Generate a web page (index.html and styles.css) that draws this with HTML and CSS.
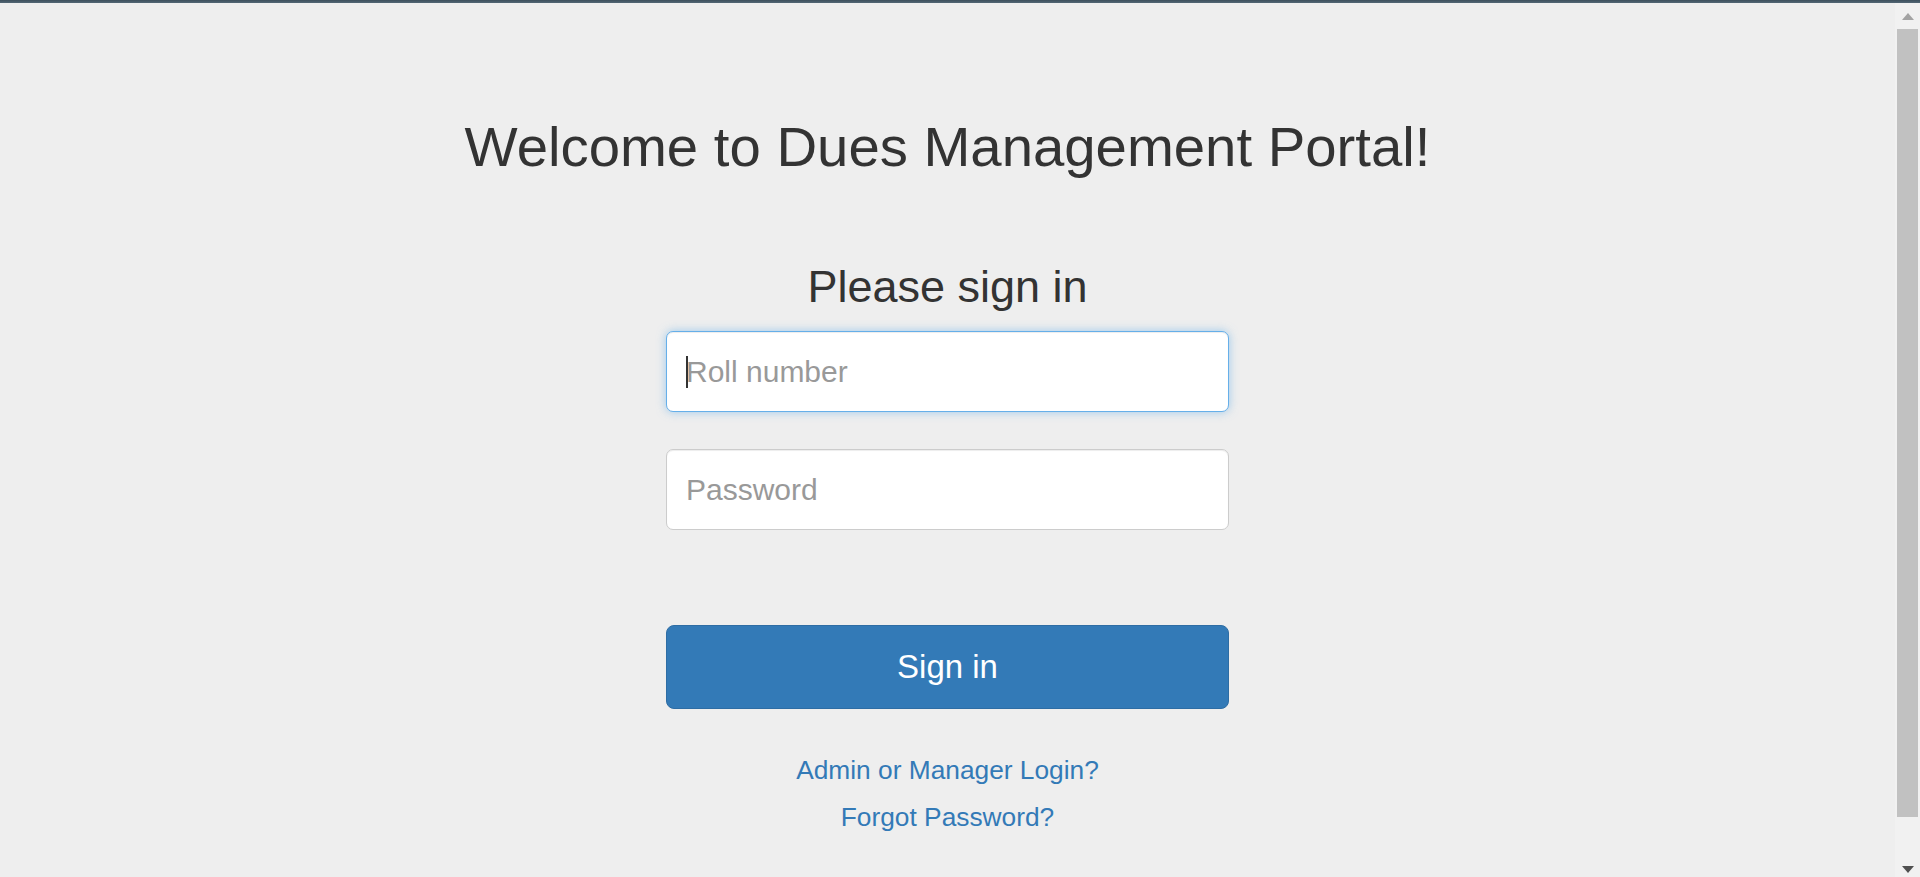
FILE: index.html
```html
<!DOCTYPE html>
<html lang="en">
<head>
<meta charset="utf-8">
<title>Dues Management Portal</title>
<link rel="stylesheet" href="styles.css">
</head>
<body>
<div class="topbar"></div>
<div class="frame">
  <main class="page">
    <h1 class="title">Welcome to Dues Management Portal!</h1>
    <form class="signin">
      <h2 class="signin-heading">Please sign in</h2>
      <div class="field field-focused">
        <input class="input is-focused" type="text" placeholder="Roll number">
      </div>
      <div class="field field-second">
        <input class="input" type="password" placeholder="Password">
      </div>
      <button class="btn-primary" type="button">Sign in</button>
      <a class="link link-first" href="#">Admin or Manager Login?</a>
      <a class="link link-second" href="#">Forgot Password?</a>
    </form>
  </main>
  <aside class="scrollbar">
    <div class="sb-btn sb-up"><span class="tri-up"></span></div>
    <div class="sb-thumb"></div>
    <div class="sb-track"></div>
    <div class="sb-btn sb-down"><span class="tri-down"></span></div>
  </aside>
</div>
</body>
</html>
```
FILE: styles.css
```css
* { box-sizing: border-box; }

html, body {
  margin: 0;
  padding: 0;
  height: 100%;
}

body {
  background: #eeeeee;
  font-family: "Liberation Sans", Arial, sans-serif;
  color: #333333;
  display: flex;
  flex-direction: column;
  overflow: hidden;
}

.topbar {
  height: 3px;
  flex: none;
  background: linear-gradient(#3d4f5c, #536775);
}

.frame {
  flex: 1;
  display: flex;
  min-height: 0;
}

.page {
  flex: 1;
  display: flex;
  flex-direction: column;
  align-items: center;
}

.title {
  margin: 116px 0 0;
  font-size: 56.3px;
  line-height: 56px;
  font-weight: 400;
  color: #333333;
  white-space: nowrap;
}

.signin {
  width: 563px;
  display: flex;
  flex-direction: column;
  align-items: stretch;
}

.signin-heading {
  margin: 90px 0 0;
  font-size: 45px;
  line-height: 44px;
  font-weight: 400;
  text-align: center;
  color: #333333;
}

.field {
  position: relative;
  margin-top: 22px;
}

.field-second {
  margin-top: 37px;
}

.input {
  display: block;
  width: 100%;
  height: 81px;
  padding: 0 19px;
  font-family: "Liberation Sans", Arial, sans-serif;
  font-size: 30px;
  color: #555555;
  background: #ffffff;
  border: 1px solid #cccccc;
  border-radius: 7px;
  box-shadow: inset 0 1px 1px rgba(0, 0, 0, 0.075);
  outline: none;
}

.input::placeholder {
  color: #999999;
  opacity: 1;
}

.input.is-focused {
  border-color: #66afe9;
  box-shadow: inset 0 1px 1px rgba(0, 0, 0, 0.075), 0 0 10px rgba(102, 175, 233, 0.6);
}

.field-focused::after {
  content: "";
  position: absolute;
  left: 20px;
  top: 25px;
  width: 2px;
  height: 32px;
  background: #333333;
}

.btn-primary {
  margin-top: 95px;
  height: 84px;
  font-family: "Liberation Sans", Arial, sans-serif;
  font-size: 33px;
  color: #ffffff;
  background: #337ab7;
  border: 1px solid #2e6da4;
  border-radius: 8px;
  cursor: pointer;
}

.link {
  display: block;
  text-align: center;
  font-size: 26.3px;
  line-height: 26px;
  color: #337ab7;
  text-decoration: none;
}

.link-first { margin-top: 48px; }
.link-second { margin-top: 21px; }

.scrollbar {
  width: 25px;
  flex: none;
  background: #f1f1f1;
  display: flex;
  flex-direction: column;
}

.sb-btn {
  height: 26px;
  flex: none;
  display: flex;
  justify-content: center;
}

.sb-up { padding-top: 10px; }
.sb-down { padding-top: 15px; }

.tri-up {
  width: 0;
  height: 0;
  border-left: 6px solid transparent;
  border-right: 6px solid transparent;
  border-bottom: 7px solid #a3a3a3;
}

.tri-down {
  width: 0;
  height: 0;
  border-left: 6px solid transparent;
  border-right: 6px solid transparent;
  border-top: 7px solid #505050;
}

.sb-thumb {
  height: 788px;
  flex: none;
  margin: 0 2px;
  background: #c1c1c1;
}

.sb-track {
  flex: 1;
}
```
